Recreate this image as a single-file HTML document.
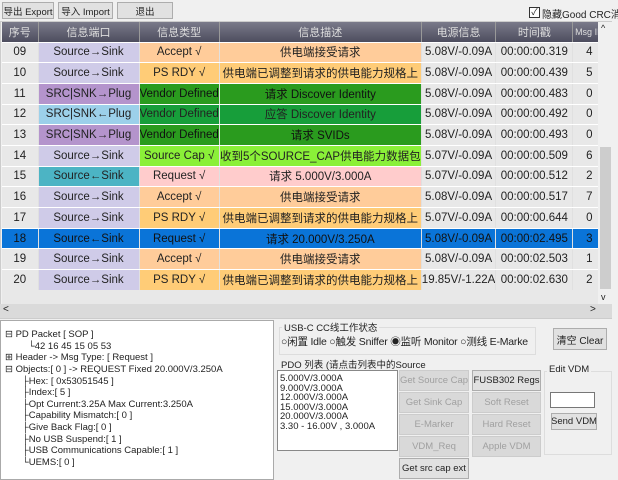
<!DOCTYPE html>
<html><head><meta charset="utf-8"><style>
*{box-sizing:border-box;margin:0;padding:0}
body{width:618px;height:480px;background:#f0f0f0;font-family:"Liberation Sans","Noto Sans CJK SC",sans-serif;font-size:11px;color:#222;position:relative;overflow:hidden}
.abs{position:absolute}
.btn{position:absolute;border:1px solid #adadad;background:#e1e1e1;text-align:center;font-size:9.5px;display:flex;align-items:center;justify-content:center;white-space:nowrap;overflow:hidden}
.dis{color:#a0a0a0;background:#d9d9d9;border-color:#ccc}
table{border-collapse:collapse;position:absolute;left:2px;top:22px;table-layout:fixed}
td,th{height:20.7px;text-align:center;white-space:nowrap;overflow:hidden;border-right:1px solid #e0e0e0;border-bottom:1px solid #fff;font-size:11.5px;font-weight:normal}
th{background:linear-gradient(#7a7a8a,#4d4d5e);color:#ddd;height:20px;font-size:11px;border-right:1px solid #999}
td.n{background:#e8e8e8}
td.g{background:#e8e8e8}
.lav{background:#cfcbe8}.pur{background:#b494cc}.sky{background:#9cd0ea}.teal{background:#4cb4c4}
.or{background:#ffcc9a}.yo{background:#ffcc77}.dg{background:#2a9b1e;color:#111}.mg{background:#179e3a}.lg{background:#8af038}.pk{background:#ffcccc}
tr.sel td{background:#0a74d8 !important;color:#111}
.tree div{position:absolute;font-size:9.5px;white-space:nowrap}
</style></head><body>
<div class="btn" style="left:2px;top:2px;width:52px;height:17px">导出 Export</div>
<div class="btn" style="left:58px;top:2px;width:55px;height:17px">导入 Import</div>
<div class="btn" style="left:117px;top:2px;width:56px;height:17px">退出</div>
<div class="abs" style="left:529px;top:7px;width:11px;height:11px;border:1px solid #333;background:#fff;font-size:9px;line-height:9px;text-align:center">✓</div>
<div class="abs" style="left:542px;top:6px;font-size:10px;white-space:nowrap">隐藏Good CRC消息</div>
<div class="abs" style="left:0;top:21px;width:612px;height:298px;background:#f0f0f0;border:1px solid #ccc"></div>
<table>
<colgroup><col style="width:36px"><col style="width:101px"><col style="width:78px"><col style="width:202px"><col style="width:69px"><col style="width:77px"><col style="width:33px"></colgroup>
<tr><th>序号</th><th>信息端口</th><th>信息类型</th><th>信息描述</th><th>电源信息</th><th>时间戳</th><th style="font-size:9px">Msg ID</th></tr>
<tr><td class="n">09</td><td class="lav">Source→Sink</td><td class="or">Accept √</td><td class="or">供电端接受请求</td><td class="g">5.08V/-0.09A</td><td class="g">00:00:00.319</td><td class="g">4</td></tr>
<tr><td class="n">10</td><td class="lav">Source→Sink</td><td class="yo">PS RDY √</td><td class="yo">供电端已调整到请求的供电能力规格上</td><td class="g">5.08V/-0.09A</td><td class="g">00:00:00.439</td><td class="g">5</td></tr>
<tr><td class="n">11</td><td class="pur">SRC|SNK→Plug</td><td class="dg" style="text-align:right">Vendor Defined</td><td class="dg">请求 Discover Identity</td><td class="g">5.08V/-0.09A</td><td class="g">00:00:00.483</td><td class="g">0</td></tr>
<tr><td class="n">12</td><td class="sky">SRC|SNK←Plug</td><td class="mg" style="text-align:right">Vendor Defined</td><td class="mg">应答 Discover Identity</td><td class="g">5.08V/-0.09A</td><td class="g">00:00:00.492</td><td class="g">0</td></tr>
<tr><td class="n">13</td><td class="pur">SRC|SNK→Plug</td><td class="dg" style="text-align:right">Vendor Defined</td><td class="dg">请求 SVIDs</td><td class="g">5.08V/-0.09A</td><td class="g">00:00:00.493</td><td class="g">0</td></tr>
<tr><td class="n">14</td><td class="lav">Source→Sink</td><td class="lg">Source Cap √</td><td class="lg">收到5个SOURCE_CAP供电能力数据包</td><td class="g">5.07V/-0.09A</td><td class="g">00:00:00.509</td><td class="g">6</td></tr>
<tr><td class="n">15</td><td class="teal">Source←Sink</td><td class="pk">Request √</td><td class="pk">请求 5.000V/3.000A</td><td class="g">5.07V/-0.09A</td><td class="g">00:00:00.512</td><td class="g">2</td></tr>
<tr><td class="n">16</td><td class="lav">Source→Sink</td><td class="or">Accept √</td><td class="or">供电端接受请求</td><td class="g">5.08V/-0.09A</td><td class="g">00:00:00.517</td><td class="g">7</td></tr>
<tr><td class="n">17</td><td class="lav">Source→Sink</td><td class="yo">PS RDY √</td><td class="yo">供电端已调整到请求的供电能力规格上</td><td class="g">5.07V/-0.09A</td><td class="g">00:00:00.644</td><td class="g">0</td></tr>
<tr class="sel"><td>18</td><td>Source←Sink</td><td>Request √</td><td>请求 20.000V/3.250A</td><td>5.08V/-0.09A</td><td>00:00:02.495</td><td>3</td></tr>
<tr><td class="n">19</td><td class="lav">Source→Sink</td><td class="or">Accept √</td><td class="or">供电端接受请求</td><td class="g">5.08V/-0.09A</td><td class="g">00:00:02.503</td><td class="g">1</td></tr>
<tr><td class="n">20</td><td class="lav">Source→Sink</td><td class="yo">PS RDY √</td><td class="yo">供电端已调整到请求的供电能力规格上</td><td class="g">19.85V/-1.22A</td><td class="g">00:00:02.630</td><td class="g">2</td></tr>
</table>
<div class="abs" style="left:2px;top:290px;width:596px;height:14px;background:#e8e8e8"></div>
<div class="abs" style="left:598px;top:22px;width:14px;height:282px;background:#f0f0f0"></div>
<div class="abs" style="left:600px;top:147px;width:11px;height:142px;background:#cdcdcd"></div>
<div class="abs" style="left:601px;top:23px;font-size:9px">^</div>
<div class="abs" style="left:601px;top:292px;font-size:9px">v</div>
<div class="abs" style="left:0;top:304px;width:612px;height:14px;background:#dadada"></div>
<div class="abs" style="left:3px;top:304px;font-size:10px">&lt;</div>
<div class="abs" style="left:590px;top:304px;font-size:10px">&gt;</div>
<div class="abs" style="left:0;top:320px;width:274px;height:160px;background:#fff;border:1px solid #aaa"></div>
<div class="tree">
<div style="left:5px;top:329px">⊟ PD Packet [ SOP ]</div>
<div style="left:28px;top:341px">└42 16 45 15 05 53</div>
<div style="left:5px;top:352px">⊞ Header -&gt; Msg Type: [ Request ]</div>
<div style="left:5px;top:364px">⊟ Objects:[ 0 ] -&gt; REQUEST Fixed 20.000V/3.250A</div>
<div style="left:22px;top:376px">├Hex: [ 0x53051545 ]</div>
<div style="left:22px;top:387px">├Index:[ 5 ]</div>
<div style="left:22px;top:399px">├Opt Current:3.25A Max Current:3.250A</div>
<div style="left:22px;top:410px">├Capability Mismatch:[ 0 ]</div>
<div style="left:22px;top:422px">├Give Back Flag:[ 0 ]</div>
<div style="left:22px;top:434px">├No USB Suspend:[ 1 ]</div>
<div style="left:22px;top:445px">├USB Communications Capable:[ 1 ]</div>
<div style="left:22px;top:457px">└UEMS:[ 0 ]</div>
</div>
<div class="abs" style="left:279px;top:327px;width:257px;height:28px;border:1px solid #ddd"></div>
<div class="abs" style="left:282px;top:320px;font-size:9.5px;background:#f0f0f0;padding:0 2px">USB-C CC线工作状态</div>
<div class="abs" style="left:281px;top:334px;font-size:10.5px;white-space:nowrap;letter-spacing:-0.2px">○闲置 Idle ○触发 Sniffer ◉监听 Monitor ○测线 E-Marke</div>
<div class="btn" style="left:553px;top:328px;width:54px;height:22px;font-size:10px">清空 Clear</div>
<div class="abs" style="left:281px;top:357px;font-size:9.5px">PDO 列表 (请点击列表中的Source</div>
<div class="abs" style="left:277px;top:370px;width:121px;height:81px;background:#fff;border:1px solid #888;font-size:9.5px;line-height:9.5px;padding:3px 2px">5.000V/3.000A<br>9.000V/3.000A<br>12.000V/3.000A<br>15.000V/3.000A<br>20.000V/3.000A<br>3.30 - 16.00V , 3.000A</div>
<div class="btn dis" style="left:399px;top:370px;width:70px;height:21px">Get Source Cap</div>
<div class="btn" style="left:472px;top:370px;width:69px;height:21px">FUSB302 Regs</div>
<div class="btn dis" style="left:399px;top:392px;width:70px;height:21px">Get Sink Cap</div>
<div class="btn dis" style="left:472px;top:392px;width:69px;height:21px">Soft Reset</div>
<div class="btn dis" style="left:399px;top:414px;width:70px;height:21px">E-Marker</div>
<div class="btn dis" style="left:472px;top:414px;width:69px;height:21px">Hard Reset</div>
<div class="btn dis" style="left:399px;top:436px;width:70px;height:21px">VDM_Req</div>
<div class="btn dis" style="left:472px;top:436px;width:69px;height:21px">Apple VDM</div>
<div class="btn" style="left:399px;top:458px;width:70px;height:21px">Get src cap ext</div>
<div class="abs" style="left:544px;top:371px;width:68px;height:84px;border:1px solid #ddd"></div>
<div class="abs" style="left:547px;top:364px;font-size:9.5px;background:#f0f0f0;padding:0 2px">Edit VDM</div>
<div class="abs" style="left:550px;top:392px;width:45px;height:16px;background:#fff;border:1px solid #777"></div>
<div class="btn" style="left:551px;top:413px;width:46px;height:17px">Send VDM</div>
</body></html>
